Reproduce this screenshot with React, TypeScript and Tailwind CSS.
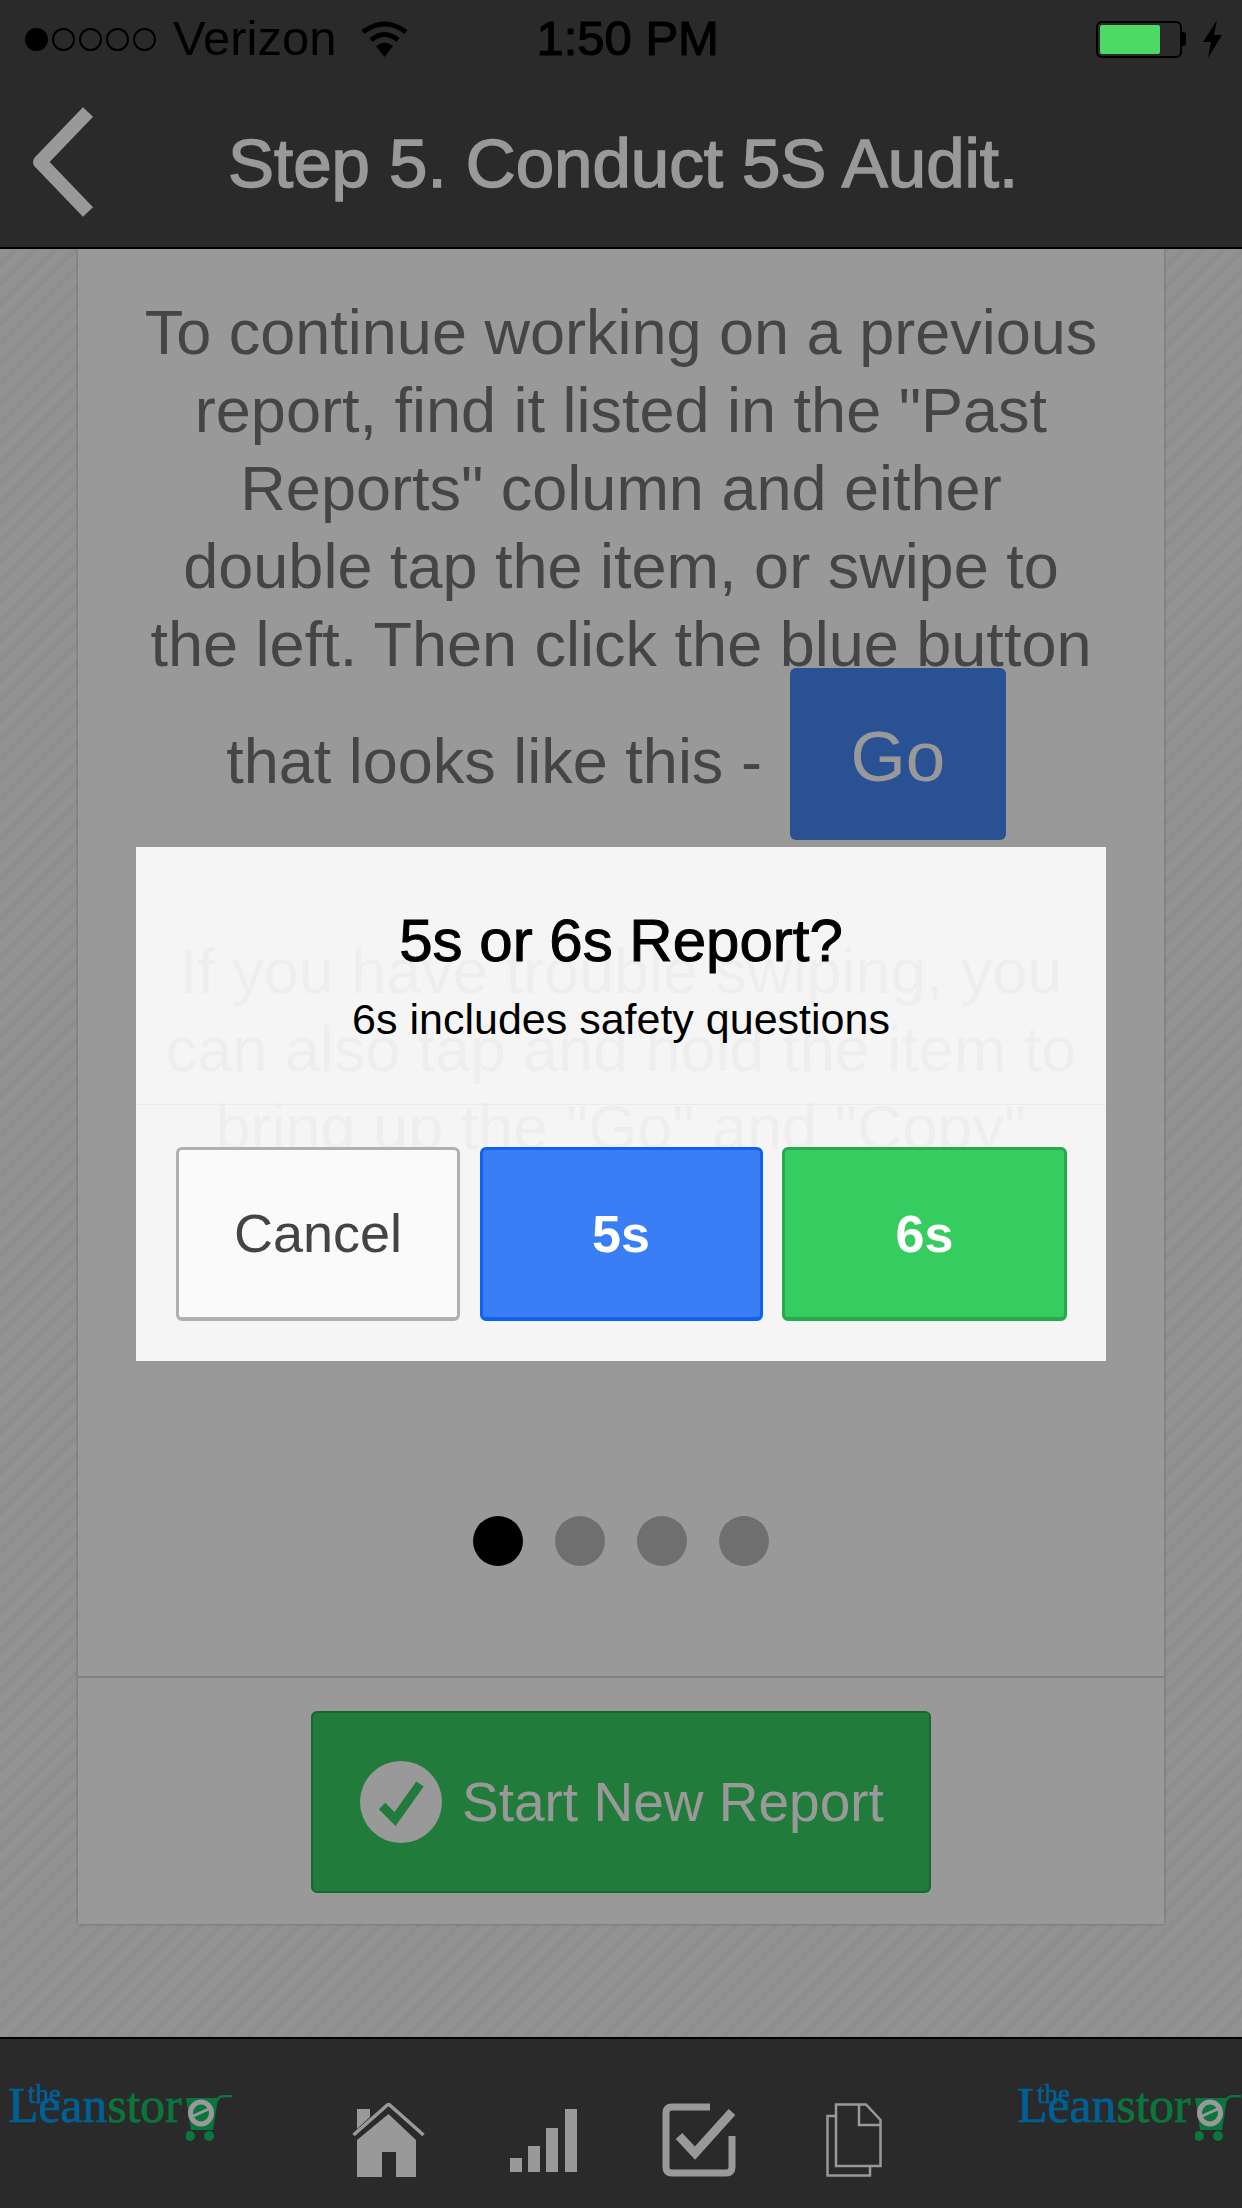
const FONT = "font-['Liberation_Sans',Arial,sans-serif]";

// Shop logo: set in a serif with the cart drawn after the last letters.
function LeanLogo() {
  return (
    <div className="relative h-[60px] w-[224px] font-['Liberation_Serif',serif]">
      <span className="absolute left-[20px] top-[-2px] text-[27px] leading-none text-[#00a0f5] [-webkit-text-stroke:0.5px_#00a0f5]">the</span>
      <span className="absolute left-0 top-[-2px] whitespace-nowrap text-[50px] leading-[48px] tracking-[-0.2px] text-[#00a0f5] [-webkit-text-stroke:0.7px_#00a0f5]">
        Lean<span className="text-[#12c465] [-webkit-text-stroke:0.7px_#12c465]">stor</span>
      </span>
      <svg className="absolute left-[178px] top-[12px]" width="46" height="46" viewBox="0 0 46 46">
        <path d="M0 3H32L27 35H5z" fill="#12c465" />
        <path d="M30 6 34 2Q36 1 46 1" fill="none" stroke="#12c465" strokeWidth="2.5" />
        <circle cx="4" cy="41" r="5" fill="#12c465" />
        <circle cx="23" cy="41" r="5" fill="#12c465" />
        <ellipse cx="15" cy="18" rx="10.5" ry="11" fill="none" stroke="#fff" strokeWidth="5" />
        <path d="M5 22 25 13" stroke="#fff" strokeWidth="3" />
      </svg>
    </div>
  );
}

function HomeIcon() {
  return (
    <svg width="73" height="74" viewBox="0 0 73 74" fill="#fff">
      <path d="M36.5 11 64 37v37H44V49H30v25H5V37z" />
      <path d="M5 6h13v8L5 26z" />
      <path d="M1.5 32 36.5 1 71.5 32" fill="none" stroke="#fff" strokeWidth="3.5" />
    </svg>
  );
}

function BarsIcon() {
  return (
    <svg width="67" height="63" viewBox="0 0 67 63" fill="#fff">
      <rect x="0" y="49" width="12" height="14" />
      <rect x="18" y="37" width="12" height="26" />
      <rect x="36" y="19" width="12" height="44" />
      <rect x="55" y="0" width="12" height="63" />
    </svg>
  );
}

function CheckBoxIcon() {
  return (
    <svg width="74" height="74" viewBox="0 0 74 74" fill="none" stroke="#fff" strokeWidth="7">
      <path d="M48 4H10Q4 4 4 10v54q0 6 6 6h54q6 0 6-6V33" />
      <path d="M17 33 33 50 70 9" strokeWidth="9" />
    </svg>
  );
}

function DocsIcon() {
  return (
    <svg width="56" height="74" viewBox="0 0 56 74" fill="none" stroke="#fff" strokeWidth="2.5">
      <path d="M10 1.5H40L54.5 17V63H10z" />
      <path d="M33 1.5V22H54" />
      <path d="M10 13H1.5V72.5H44V63" />
    </svg>
  );
}

function Signal() {
  return (
    <div className="flex items-center gap-[4px]">
      <span className="h-[23px] w-[23px] rounded-full border-2 border-black bg-black" />
      {[0, 1, 2, 3].map((i) => (
        <span key={i} className="h-[23px] w-[23px] rounded-full border-2 border-black" />
      ))}
    </div>
  );
}

export default function App() {
  return (
    <div className={`relative flex h-[2208px] w-[1242px] flex-col overflow-hidden ${FONT}`}>
      <header className="flex h-[249px] shrink-0 items-end border-b-2 border-black bg-[#464646]">
        <div className="flex h-[187px] w-full items-start pl-[32px]">
          <svg className="mt-[47px]" width="62" height="110" viewBox="0 0 62 110" fill="none" stroke="#fff" strokeWidth="14" strokeLinejoin="round">
            <path d="M56 5 8 55 56 105" />
          </svg>
          <h1 className="ml-[134px] mt-[72px] text-[69px] font-medium leading-[64px] text-white [-webkit-text-stroke:1.5px_#fff]">
            Step 5. Conduct 5S Audit.
          </h1>
        </div>
      </header>

      <main className="flex-1 bg-[repeating-linear-gradient(135deg,#f4f4f4_0,#f4f4f4_9px,#ededed_9px,#ededed_14px)] px-[78px]">
        <section className="flex h-[1675px] flex-col bg-white shadow-[0_0_3px_rgba(0,0,0,0.3)]">
          <div className="flex-1 pt-[44px] text-center text-[63px] leading-[78px] text-[#747474]">
            <p>
              To continue working on a previous
              <br />
              report, find it listed in the "Past
              <br />
              Reports" column and either
              <br />
              double tap the item, or swipe to
              <br />
              the left. Then click the blue button
            </p>
            <div className="-mt-[15px] flex items-center justify-center gap-[28px] pr-[10px]">
              <span className="pt-[14px]">that looks like this -</span>
              <span className="flex h-[172px] w-[216px] items-center justify-center rounded-[6px] bg-[#4688f5] pt-[6px] text-[71px] text-white">
                Go
              </span>
            </div>
            <p className="mt-[92px]">
              If you have trouble swiping, you
              <br />
              can also tap and hold the item to
              <br />
              bring up the "Go" and "Copy"
            </p>
          </div>

          <div className="mb-[110px] flex justify-center gap-[32px]">
            <span className="h-[50px] w-[50px] rounded-full bg-black" />
            <span className="h-[50px] w-[50px] rounded-full bg-[#b9b9b9]" />
            <span className="h-[50px] w-[50px] rounded-full bg-[#b9b9b9]" />
            <span className="h-[50px] w-[50px] rounded-full bg-[#b9b9b9]" />
          </div>

          <div className="flex h-[248px] items-start justify-center border-t-2 border-[#d8d8d8] pt-[33px]">
            <button className="flex h-[182px] w-[620px] items-center rounded-[6px] border-2 border-[#2ea84f] bg-[#37cd61] pl-[47px] text-[55px] text-white">
              <span className="mr-[20px] flex h-[82px] w-[82px] items-center justify-center rounded-full bg-white">
                <svg width="82" height="82" viewBox="0 0 82 82" fill="none" stroke="#37cd61" strokeWidth="9">
                  <path d="M22 45 35 58 60 23" />
                </svg>
              </span>
              Start New Report
            </button>
          </div>
        </section>
      </main>

      <footer className="flex h-[171px] shrink-0 items-start border-t-2 border-black bg-[#464646] pl-[8px]">
        <div className="mt-[44px]">
          <LeanLogo />
        </div>
        <nav className="ml-[120px] mt-[64px] flex w-[530px] items-end">
          <HomeIcon />
          <div className="mb-[5px] ml-[85px]">
            <BarsIcon />
          </div>
          <div className="ml-[85px]">
            <CheckBoxIcon />
          </div>
          <div className="ml-[90px]">
            <DocsIcon />
          </div>
        </nav>
        <div className="ml-[135px] mt-[44px]">
          <LeanLogo />
        </div>
      </footer>

      {/* dimming sits over everything except the status bar and the dialog */}
      <div className="absolute inset-0 bg-black/40" />

      <div className="absolute left-0 right-0 top-0 flex h-[78px] items-center text-[49px] text-black">
        <div className="ml-[25px]">
          <Signal />
        </div>
        <span className="ml-[17px]">Verizon</span>
        <svg className="ml-[25px]" width="47" height="36" viewBox="0 0 47 36" fill="none" stroke="#000" strokeWidth="5">
          <path d="M2 11Q23.5-5 45 11" />
          <path d="M10 19Q23.5 8 37 19" />
          <path d="M23.5 36 15 25Q23.5 18 32 25z" fill="#000" stroke="none" />
        </svg>
        <span className="ml-[128px] font-medium [-webkit-text-stroke:1.2px_#000]">1:50 PM</span>
        <div className="ml-auto mr-[20px] flex items-center">
          <div className="flex h-[37px] w-[86px] items-center rounded-[6px] border-2 border-black p-[2px]">
            <div className="h-full w-[60px] rounded-[2px] bg-[#4cd964]" />
          </div>
          <span className="h-[14px] w-[4px] rounded-r-[3px] bg-black" />
          <svg className="ml-[17px]" width="19" height="38" viewBox="0 0 19 38" fill="#000">
            <path d="M14 0 0 22h8L5 38 19 15h-8z" />
          </svg>
        </div>
      </div>

      <div className="absolute left-[136px] top-[847px] h-[514px] w-[970px] bg-[#fdfdfd]/92">
        <div className="h-[258px] border-b border-[#ebebeb] pt-[60px] text-center text-black">
          <div className="text-[60px] font-medium leading-[68px] [-webkit-text-stroke:1px_#000]">5s or 6s Report?</div>
          <div className="mt-[20px] text-[43px] leading-[48px]">6s includes safety questions</div>
        </div>
        <div className="ml-[40px] mr-[39px] mt-[42px] flex justify-between">
          <button className="h-[174px] w-[284px] rounded-[6px] border-[3px] border-b-[4px] border-[#b0b0b0] bg-[#fafafa] text-[54px] text-[#444]">
            Cancel
          </button>
          <button className="h-[174px] w-[283px] rounded-[6px] border-[3px] border-b-[4px] border-[#0f62f0] bg-[#3a7ef6] text-[52px] font-bold text-white">
            5s
          </button>
          <button className="h-[174px] w-[285px] rounded-[6px] border-[3px] border-b-[4px] border-[#2aa84e] bg-[#35cd60] text-[52px] font-bold text-white">
            6s
          </button>
        </div>
      </div>
    </div>
  );
}
